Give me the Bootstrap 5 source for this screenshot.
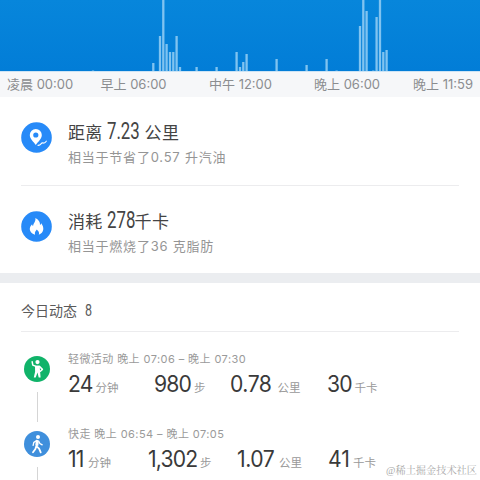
<!DOCTYPE html>
<html lang="zh-CN">
<head>
<meta charset="utf-8">
<meta name="viewport" content="width=device-width, initial-scale=1">
<title>今日动态</title>
<link href="https://cdn.jsdelivr.net/npm/bootstrap@5.3.0/dist/css/bootstrap.min.css" rel="stylesheet">
<style>
body{width:480px;height:480px;overflow:hidden;background:#fff;font-family:Inter,"Noto Sans CJK SC",sans-serif;color:#444}
.chart{height:72px;background:linear-gradient(#0786db,#027dd7);border-bottom:1px solid #cde4f5}
.chart svg{display:block}
.axis{height:25px;background:#f6f7f9;color:#8b8d90;font-size:13px;line-height:25px;padding:0 7px 0 7px;display:grid;grid-template-columns:93.5px 108.5px 105px 99px 67px}
.fit{white-space:nowrap;display:block}
.metric{height:88px;margin:0 21px;padding-top:22px}
.metric+.metric{border-top:1px solid #ececee}
.metric svg{margin-top:3px;width:31px;height:31px;flex:none}
.metric-text{margin-left:16px}
.metric-title{font-size:17px;line-height:28px;height:28px;letter-spacing:.3px;white-space:nowrap;display:flex}
.narrow{font-family:Roboto,sans-serif;font-size:24px;font-weight:400;letter-spacing:0;display:inline-block;transform-origin:0 50%;transform:translateY(-2px) scaleX(.7)}
.metric-note{font-size:13px;line-height:20px;color:#959595;letter-spacing:.78px;white-space:nowrap}
.divider{height:10px;background:#ebedf0}
.today{height:49px;margin:0 21px;border-bottom:1px solid #ececee;font-size:14px;line-height:56px;color:#5a5a5a;display:flex}
.today .narrow{font-size:16.5px;margin-left:8px;transform:scaleX(.76)}
.activity{height:75px;margin-left:24px;display:flex}
.rail{width:26px;flex:none;display:flex;flex-direction:column;align-items:center}
.rail svg{width:26px;height:26px;flex:none}
.rail i{width:1px;height:30px;background:#d5d5d5;margin-top:10px}
.activity-text{margin-left:18px}
.when{font-size:11px;line-height:18px;height:17px;color:#9a9a9a;letter-spacing:.42px;white-space:nowrap}
.figures{display:grid;height:34px;line-height:34px;align-items:baseline}
.figures>div{display:flex;align-items:baseline;white-space:nowrap}
.figures b{font-size:22.5px;font-weight:400;color:#3a3a3a;display:block;flex:none;letter-spacing:-.9px;transform-origin:0 50%;transform:scaleX(.94)}
.figures small{font-size:11.5px;color:#999;display:block}
.credit{position:absolute;right:3px;bottom:1px;font:10.2px/16px "Liberation Serif","Noto Serif CJK SC","Noto Sans CJK SC",serif;color:#aaa;white-space:nowrap}
</style>
</head>
<body class="position-relative">
<div class="chart">
<svg width="480" height="71" fill="none" stroke="#80c3f0" stroke-width="2.3">
<path d="M153.3 63v8M160 36v35M163.3 0v71M166.6 44v27M170 52v19M173.3 52v19M176.6 36v35M180 67v4M196.6 67v4M216.6 67v4M236.6 52v19M240 67v4M243.3 62v9M246.6 54v17M276.6 59v12M306.6 65v6M326.6 59v12M360 26v45M363.3 0v71M366.6 11v60M376.6 17v54M380 0v71M383.3 52v19M386.6 50v21M93 70.5v.5M336.6 70.5v.5M373.3 70.5v.5"/>
</svg>
</div>
<div class="axis"><span class="fit">凌晨 00:00</span><span class="fit">早上 06:00</span><span class="fit">中午 12:00</span><span class="fit">晚上 06:00</span><span class="fit">晚上 11:59</span></div>

<section>
<div class="metric d-flex align-items-start">
<svg viewBox="0 0 31 31"><circle cx="15.5" cy="15.5" r="15.3" fill="#278af8"/><path fill="#fff" fill-rule="evenodd" d="M14.8 6.9a6 6 0 0 0-6 6c0 4 3.8 6.5 6 10.2 2.2-3.7 6-6.2 6-10.2a6 6 0 0 0-6-6zm0 3.5a2.6 2.6 0 1 1 0 5.2 2.6 2.6 0 0 1 0-5.2z"/><path d="M17 23.4q2-.3 3-1.6t2.6-.7q1.5-.2 2.7-1.9" fill="none" stroke="#fff" stroke-width="1.1" stroke-linecap="round"/></svg>
<div class="metric-text"><div class="metric-title"><span>距离</span><span class="narrow" style="margin-left:4px;width:38px">7.23</span><span>公里</span></div><div class="metric-note">相当于节省了0.57 升汽油</div></div>
</div>
<div class="metric d-flex align-items-start">
<svg viewBox="0 0 31 31"><circle cx="15.5" cy="15.5" r="15.3" fill="#278af8"/><path fill="#fff" d="M14.4 7c3.6 2 4.8 4.3 4.6 7 .7-.4 1.1-1.1 1.3-1.8 3.1 4.3 2.9 9.3-2.5 11.5 1-2.4-.5-3.4-2-5.2-1.3 1.8-2.3 2.4-1.8 5.2-6.8-2.5-6-7.7-2.9-10.5.1 1 .5 1.5 1 1.9.1-2.9 2.8-4 2.3-8.1z"/></svg>
<div class="metric-text"><div class="metric-title"><span>消耗</span><span class="narrow" style="margin-left:4px;width:28px">278</span><span>千卡</span></div><div class="metric-note">相当于燃烧了36 克脂肪</div></div>
</div>
</section>
<div class="divider"></div>
<section>
<div class="today"><span>今日动态</span><span class="narrow">8</span></div>
<div class="activity" style="margin-top:18px">
<div class="rail"><svg style="margin-top:6px" viewBox="0 0 26 26"><circle cx="13" cy="13" r="13" fill="#10b369"/><circle cx="13.5" cy="6.1" r="2.1" fill="#fff"/><path d="M8.2 5.8l.6 3.3 3.2 1.3h3.4l3 3-2 1.9" fill="none" stroke="#fff" stroke-width="1.5" stroke-linecap="round" stroke-linejoin="round"/><path fill="#fff" d="M11 9.7h4.7l.4 6 .5 5.8h-1.9l-1.2-5-1.8 5H9.8l1.3-5.8z"/></svg><i></i></div>
<div class="activity-text"><div class="when">轻微活动 晚上 07:06 – 晚上 07:30</div>
<div class="figures" style="grid-template-columns:86px 75.5px 97.5px 70px"><div><b style="width:27.5px">24</b><small>分钟</small></div><div><b style="width:40px">980</b><small>步</small></div><div><b style="width:48px;letter-spacing:-.5px">0.78</b><small>公里</small></div><div><b style="width:27.5px">30</b><small>千卡</small></div></div></div>
</div>
<div class="activity">
<div class="rail"><svg style="margin-top:6px" viewBox="0 0 26 26"><circle cx="13" cy="13" r="13" fill="#3f8fdc"/><circle cx="14" cy="6" r="2" fill="#fff"/><path d="M12.9 9.4l-3.1 2-.7 3M14.6 10l1.3 2.6 2.3 1.2" fill="none" stroke="#fff" stroke-width="1.3" stroke-linecap="round"/><path d="M13.3 10l-.6 5.3 2.4 2.3 1.6 3.8M12.3 15l-.9 3-2.4 3.2" fill="none" stroke="#fff" stroke-width="1.8" stroke-linecap="round" stroke-linejoin="round"/><path d="M13.3 10l-.5 4.5" stroke="#fff" stroke-width="3"/></svg><i></i></div>
<div class="activity-text"><div class="when">快走 晚上 06:54 – 晚上 07:05</div>
<div class="figures" style="grid-template-columns:80px 88.5px 91.5px 70px"><div><b style="width:20px">11</b><small>分钟</small></div><div><b style="width:52px">1,302</b><small>步</small></div><div><b style="width:42.5px;letter-spacing:-.5px">1.07</b><small>公里</small></div><div><b style="width:25px;letter-spacing:0">41</b><small>千卡</small></div></div></div>
</div>
</section>
<div class="credit">@稀土掘金技术社区</div>
<script src="https://cdn.jsdelivr.net/npm/bootstrap@5.3.0/dist/js/bootstrap.bundle.min.js"></script>
</body>
</html>
